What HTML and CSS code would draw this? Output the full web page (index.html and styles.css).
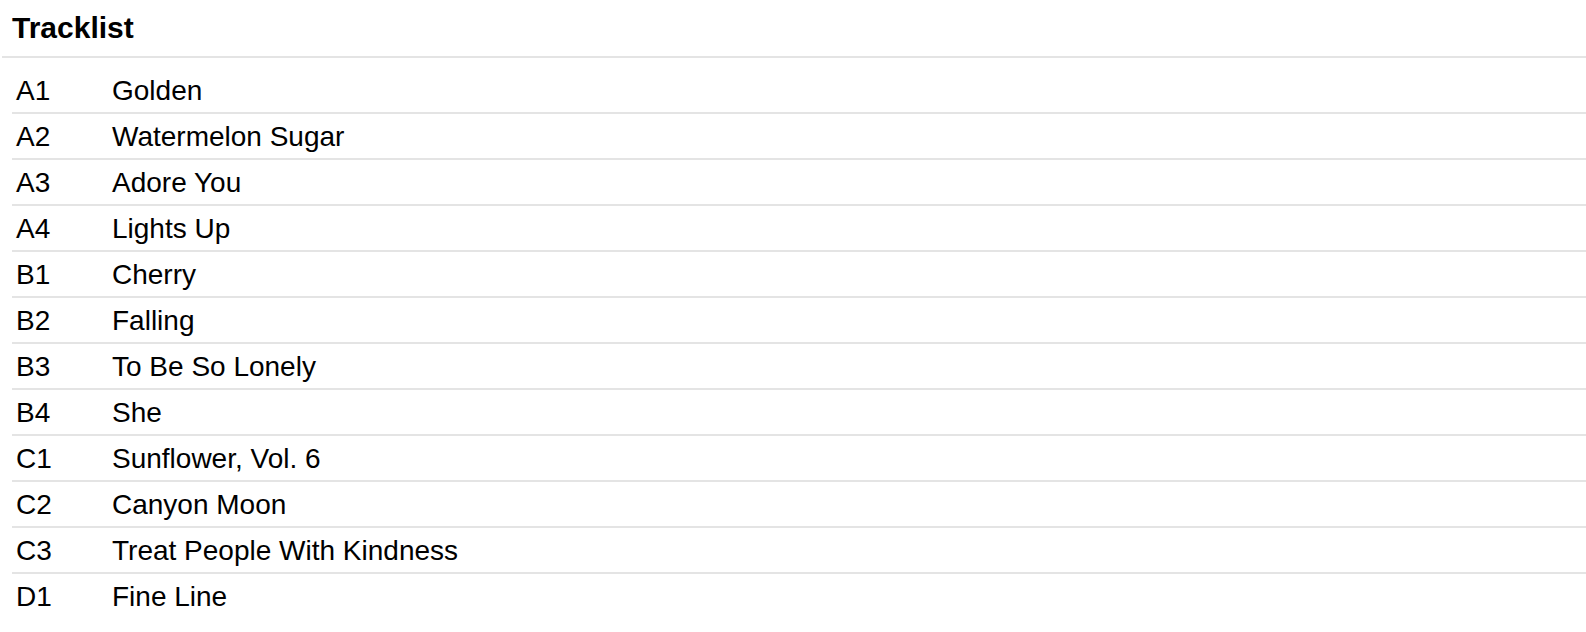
FILE: index.html
```html
<!DOCTYPE html>
<html lang="en">
<head>
<meta charset="utf-8">
<title>Tracklist</title>
<link rel="stylesheet" href="styles.css">
</head>
<body>
<section class="tracklist">
  <h2 class="tracklist-title">Tracklist</h2>
  <ol class="tracks">
    <li class="track"><span class="pos">A1</span><span class="name">Golden</span></li>
    <li class="track"><span class="pos">A2</span><span class="name">Watermelon Sugar</span></li>
    <li class="track"><span class="pos">A3</span><span class="name">Adore You</span></li>
    <li class="track"><span class="pos">A4</span><span class="name">Lights Up</span></li>
    <li class="track"><span class="pos">B1</span><span class="name">Cherry</span></li>
    <li class="track"><span class="pos">B2</span><span class="name">Falling</span></li>
    <li class="track"><span class="pos">B3</span><span class="name">To Be So Lonely</span></li>
    <li class="track"><span class="pos">B4</span><span class="name">She</span></li>
    <li class="track"><span class="pos">C1</span><span class="name">Sunflower, Vol. 6</span></li>
    <li class="track"><span class="pos">C2</span><span class="name">Canyon Moon</span></li>
    <li class="track"><span class="pos">C3</span><span class="name">Treat People With Kindness</span></li>
    <li class="track"><span class="pos">D1</span><span class="name">Fine Line</span></li>
  </ol>
</section>
</body>
</html>
```
FILE: styles.css
```css
html, body {
  margin: 0;
  padding: 0;
  background: #ffffff;
}

body {
  font-family: "Liberation Sans", Arial, Helvetica, sans-serif;
  color: #000000;
}

.tracklist {
  padding-left: 2px;
}

.tracklist-title {
  margin: 0;
  padding: 12px 0 12px 10px;
  font-size: 30px;
  line-height: 32px;
  font-weight: 700;
  border-bottom: 2px solid #e4e4e4;
}

.tracks {
  list-style: none;
  margin: 10px 0 0 10px;
  padding: 0;
}

.track {
  display: flex;
  height: 42px;
  padding-top: 2px;
  align-items: center;
  font-size: 28px;
  line-height: 42px;
  border-bottom: 2px solid #e4e4e4;
}

.track:last-child {
  border-bottom: none;
}

.pos {
  width: 96px;
  padding-left: 4px;
  flex: none;
}

.name {
  flex: 1;
}
```
